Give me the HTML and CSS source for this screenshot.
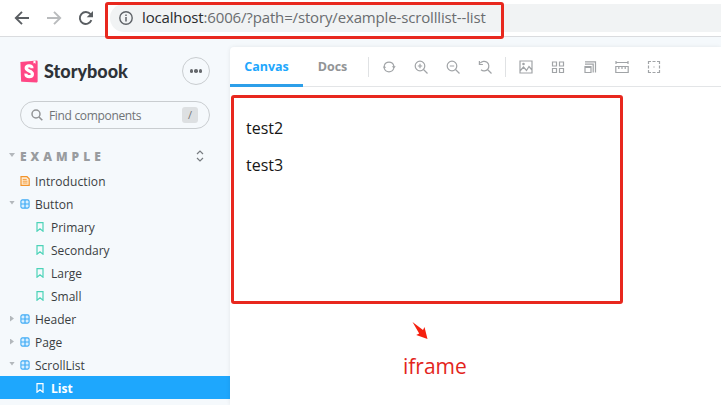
FILE: index.html
```html
<!DOCTYPE html>
<html lang="en">
<head>
<meta charset="utf-8">
<title>Storybook</title>
<link rel="stylesheet" href="styles.css">
</head>
<body>
<svg class="defs" aria-hidden="true">
  <symbol id="bookmark" viewBox="0 0 8 10"><path d="M1 .6h6v8.600L4 6.700 1 9.200z" fill="none" stroke="currentColor" stroke-width="1.200"/></symbol>
  <symbol id="component" viewBox="0 0 10 10"><rect x=".9" y=".9" width="8.200" height="8.200" rx="1.500" fill="#d9efff" stroke="#3fabf5" stroke-width="1.100"/><path d="M5 1v8M1 5h8" stroke="#3fabf5" stroke-width="1.200"/></symbol>
</svg>
<header class="browser">
  <nav class="nav">
    <svg width="16" height="16" viewBox="0 0 16 16"><path d="M15 8H2M8 1.800 1.800 8 8 14.200" stroke="#5a5e62"/></svg>
    <svg width="16" height="16" viewBox="0 0 16 16"><path d="M1 8h13M8 1.800 14.200 8 8 14.200" stroke="#b9bbbd"/></svg>
    <svg width="16" height="16" viewBox="0 0 16 16"><path class="arc" d="M13.400 10.200A6 6 0 1 1 12.500 4.200" stroke="#5a5e62"/><path class="tip" d="M15 1v6.300H8.700z"/></svg>
  </nav>
  <div class="address">
    <svg width="14" height="14" viewBox="0 0 14 14"><circle cx="7" cy="7" r="6.200" fill="none" stroke="#5f6368" stroke-width="1.400"/><path d="M7 6v4.400M7 3.400v1.500" stroke="#5f6368" stroke-width="1.500"/></svg>
    <span class="url"><b>localhost</b>:6006/?path=/story/example-scrolllist--list</span>
  </div>
  <div class="mark mark-url"></div>
</header>
<div class="app">
  <aside class="sidebar">
    <div class="brand">
      <svg class="logo" width="18" height="23" viewBox="0 0 18 23"><path d="M.4 2.100 16.800.6Q17.600.6 17.600 1.400V21.600Q17.600 22.400 16.800 22.400L2 21.800Q1.200 21.700 1.100 20.900z" fill="#ff4785"/><path d="M12 8.200C12 6.200 10.700 5.700 9 5.800 7.200 5.900 6.100 6.700 6.200 8.200 6.400 11.500 12.300 10.300 12.400 13.900 12.400 15.900 11 16.700 9.200 16.700 7.200 16.700 5.800 15.800 5.900 13.700" fill="none" stroke="#fff" stroke-width="3.200"/><path d="M13.500.9l2-.2.100 3-1.100-.8-1.100.7z" fill="#fff"/></svg>
      <span class="name">Storybook</span>
      <span class="more"><i></i><i></i><i></i></span>
    </div>
    <div class="search">
      <svg width="12" height="12" viewBox="0 0 12 12"><circle cx="5" cy="5" r="4" fill="none" stroke="#929496" stroke-width="1.500"/><path d="m8 8 3.300 3.300" stroke="#929496" stroke-width="1.600"/></svg>
      <span class="hint">Find components</span><kbd>/</kbd>
    </div>
    <div class="group"><i class="open"></i><span>EXAMPLE</span>
      <svg width="8" height="12" viewBox="0 0 8 12"><path d="M1 4l3-3 3 3M1 8l3 3 3-3" fill="none" stroke="#777c80" stroke-width="1.200"/></svg>
    </div>
    <ul class="tree">
      <li><i></i><svg width="10" height="10" viewBox="0 0 10 10"><path d="M1 .7h6L9.200 2.800v6.500H1z" fill="#ffefd9" stroke="#f2942c" stroke-width="1.200"/><path d="M2.700 3.400h4M2.700 5.200h4.800M2.700 7h4.800" stroke="#f2942c" stroke-width=".9"/></svg><span class="intro">Introduction</span></li>
      <li><i class="open"></i><svg width="10" height="10"><use href="#component"/></svg><span>Button</span></li>
      <li class="story"><svg width="8" height="10"><use href="#bookmark"/></svg><span>Primary</span></li>
      <li class="story"><svg width="8" height="10"><use href="#bookmark"/></svg><span>Secondary</span></li>
      <li class="story"><svg width="8" height="10"><use href="#bookmark"/></svg><span>Large</span></li>
      <li class="story"><svg width="8" height="10"><use href="#bookmark"/></svg><span>Small</span></li>
      <li><i class="shut"></i><svg width="10" height="10"><use href="#component"/></svg><span>Header</span></li>
      <li><i class="shut"></i><svg width="10" height="10"><use href="#component"/></svg><span>Page</span></li>
      <li><i class="open"></i><svg width="10" height="10"><use href="#component"/></svg><span>ScrollList</span></li>
      <li class="story selected"><svg width="8" height="10"><use href="#bookmark"/></svg><span>List</span></li>
    </ul>
  </aside>
  <main class="main">
    <div class="toolbar">
      <span class="tab active">Canvas</span><span class="tab docs">Docs</span>
      <div class="tools first">
        <svg viewBox="0 0 14 14"><path d="M2.200 5.800A5 5 0 0 1 11.800 5.800V8M11.800 8.200A5 5 0 0 1 2.200 8.200V6"/><path d="M0 7.800h1.200L2.200 5.500l2 2.300zM9.800 6.200l2 2.300 2-2.300z" class="solid"/></svg>
        <svg viewBox="0 0 14 14"><circle cx="6" cy="6" r="4.800"/><path d="m9.500 9.500 4 4M3.800 6h4.400M6 3.800v4.400"/></svg>
        <svg viewBox="0 0 14 14"><circle cx="6" cy="6" r="4.800"/><path d="m9.500 9.500 4 4M3.800 6h4.400"/></svg>
        <svg viewBox="0 0 14 14"><path d="M2.200 3.200A4.800 4.800 0 1 1 3 9.800M9.500 9.500l4 4M1.400 1v3.500h3.500"/></svg>
      </div>
      <div class="tools">
        <svg viewBox="0 0 14 14"><path d="M1 1h12v12H1zM1 11l3.500-4 3 3.500 2.500-4L13 10"/><circle cx="4.500" cy="4" r=".7"/></svg>
        <svg viewBox="0 0 14 14"><path d="M1.500 2h4v4h-4zM8.500 2h4v4h-4zM1.500 8.500h4v4h-4zM8.500 8.500h4v4h-4z"/></svg>
        <svg viewBox="0 0 14 14"><path d="M2 6.500h6v6H2zM2 7.300h6M2 4.200h8.200v8.300M2 1.800h10.500v10.700"/></svg>
        <svg viewBox="0 0 14 14"><path d="M.5 2.500h13M1 1v3M13 1v3M.8 6.500h12.400v6H.8zM3.800 6.500v2.500M7 6.500v2.500M10.200 6.500v2.500"/></svg>
        <svg viewBox="0 0 14 14"><path d="M1.500 4V1.500H4M5.500 1.500h3M10 1.500h2.500V4M12.500 5.500v3M12.500 10v2.500H10M8.500 12.500h-3M4 12.500H1.500V10M1.500 8.500v-3M6.400 7h1.200"/></svg>
      </div>
    </div>
    <section class="canvas">
      <div class="preview"><p>test2</p><p>test3</p></div>
      <div class="note">
        <svg width="18" height="19" viewBox="0 0 18 19"><path d="M1.500 1 12 9l1.500-3L16.500 18 5.200 14l3-1.400z" fill="#f5200f"/></svg>
        <span>iframe</span>
      </div>
    </section>
  </main>
</div>
</body>
</html>
```
FILE: styles.css
```css
* { box-sizing: border-box; }
body { margin: 0; width: 721px; height: 405px; overflow: hidden; background: #f5f9fc; font-family: "Open Sans", "Noto Sans", sans-serif; display: flex; flex-direction: column; }
.defs { position: absolute; width: 0; height: 0; }
svg { flex: none; display: block; }
.browser { position: relative; height: 37px; flex: none; display: flex; align-items: center; background: #fff; border-bottom: 1px solid #dadcdf; }
.nav { width: 110px; flex: none; padding-left: 14px; display: flex; gap: 16px; }
.nav path { fill: none; stroke-width: 1.9; }
.nav .tip { fill: #5a5e62; }
.address { flex: 1; height: 28px; display: flex; align-items: center; gap: 9px; padding-left: 9px; background: #f1f3f4; border-radius: 14px 0 0 14px; }
.url { margin-top: -2px; font-size: 15px; color: #6a6d70; white-space: nowrap; letter-spacing: -.15px; }
.url b { font-weight: 400; color: #292b2d; }
.mark { border: 3px solid #e8281e; border-radius: 3px; }
.mark-url { position: absolute; left: 105px; top: 2px; width: 399px; height: 37px; z-index: 2; }
.app { flex: 1; display: flex; min-height: 0; }
.sidebar { width: 230px; flex: none; }
.brand { display: flex; align-items: center; height: 28px; margin: 20px 20px 0; }
.name { margin-left: 6px; font: 900 18px/28px Lato, sans-serif; color: #2e3338; }
.more { margin-left: auto; width: 28px; height: 28px; border: 1px solid #c9cdd0; border-radius: 50%; display: flex; align-items: center; justify-content: center; gap: 1px; }
.more i { width: 3.5px; height: 3.5px; border-radius: 50%; background: #66696d; }
.search { display: flex; align-items: center; height: 28px; margin: 16px 20px 0; padding: 0 11px 0 10px; border: 1px solid #c9cdd0; border-radius: 14px; }
.hint { margin-left: 6px; padding-top: 1px; font-size: 12px; letter-spacing: -.33px; color: #707376; }
kbd { margin-left: auto; width: 16px; height: 16px; border-radius: 3px; background: #dde0e2; color: #777; font: 11px/16px "Open Sans", sans-serif; text-align: center; }
.group { display: flex; align-items: center; height: 24px; margin-top: 15px; padding: 0 26px 0 9px; font-size: 12px; font-weight: 800; color: #999c9f; letter-spacing: 4px; }
.group svg { margin-left: auto; }
.group i { margin-right: 5px; }
.tree { list-style: none; margin: 1px 0 0; padding: 0; }
.tree li { display: flex; align-items: center; height: 23px; padding-left: 9px; font-size: 12px; color: #3a3e42; }
.tree i { width: 6px; margin-right: 5px; flex: none; }
.tree svg { margin-top: 1px; }
.tree span { margin-left: 5px; padding-top: 2px; }
.tree .intro { letter-spacing: .1px; }
.tree .story { padding-left: 36px; color: #4cd3b8; }
.tree .story span { margin-left: 7px; color: #3a3e42; }
.tree .selected { background: #1ea7fd; color: #fff; }
.tree .selected span { color: #fff; font-weight: 700; }
i.open, i.shut { position: relative; width: 6px; height: 6px; }
i.open::before, i.shut::before { content: ""; display: block; background: #b3b8bc; }
i.open::before { height: 4px; clip-path: polygon(0 0, 100% 0, 50% 100%); }
i.shut::before { width: 4px; height: 6px; margin-left: 1px; clip-path: polygon(0 0, 100% 50%, 0 100%); }
.main { flex: 1; margin-top: 10px; background: #fff; border-radius: 4px 0 0 0; box-shadow: 0 0 4px rgba(0,0,0,.08); }
.toolbar { height: 40px; display: flex; align-items: center; border-bottom: 1px solid #e3e5e7; }
.tab { height: 40px; line-height: 40px; font-size: 12.5px; font-weight: 700; color: #929496; text-align: center; }
.active { width: 73px; color: #1ea7fd; border-bottom: 3px solid #2d9fe9; }
.docs { width: 59px; }
.tools { display: flex; align-items: center; gap: 18px; height: 20px; padding-left: 13px; margin-left: 13px; border-left: 1px solid #e0e2e4; }
.tools.first { margin-left: 6px; }
.tools svg { width: 14px; height: 14px; fill: none; stroke: #a1a4a7; stroke-width: 1.2; }
.tools .solid { fill: #a1a4a7; stroke: none; }
.canvas { padding: 8px 0 0 1px; }
.preview { width: 392px; height: 209px; padding: 19px 12px; border: 3px solid #e8281e; border-radius: 3px; }
.preview p { margin: 0 0 15px; font-size: 16px; line-height: 22px; color: #161616; }
.note { width: 75px; margin: 17px 0 0 172px; color: #e3251c; font-size: 21px; line-height: 28px; }
.note svg { margin: 0 0 12px 8px; }
```
